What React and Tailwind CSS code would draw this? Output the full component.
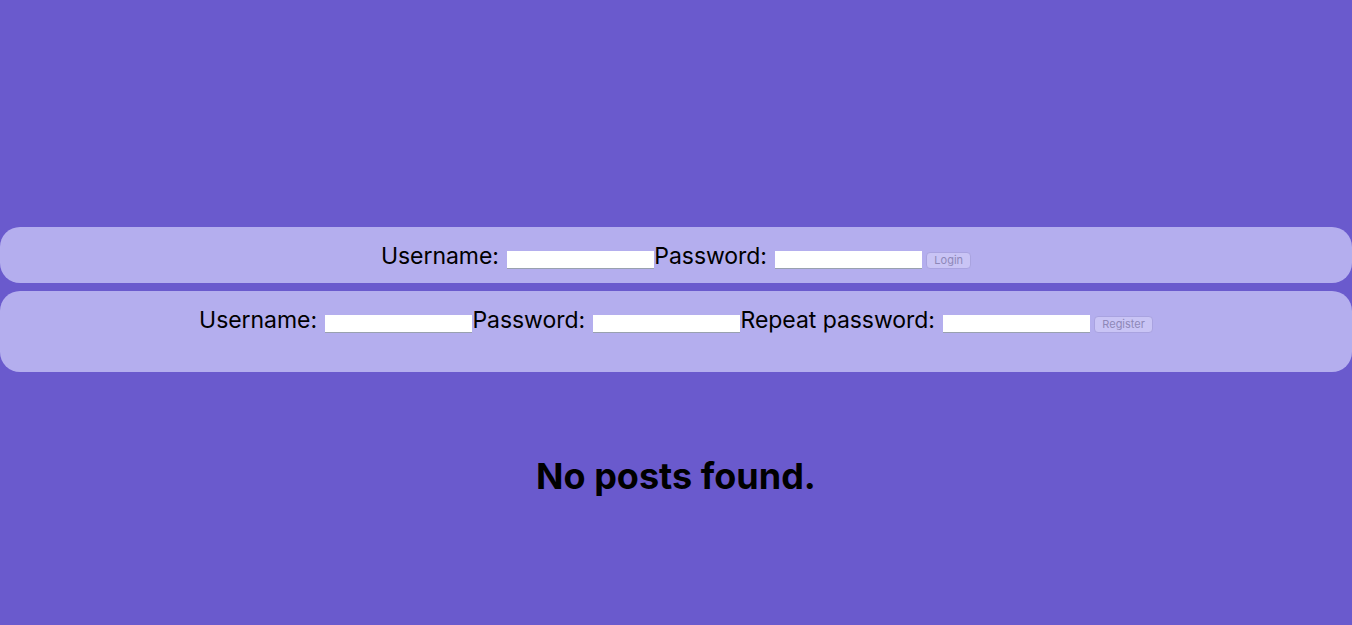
export default function App() {
  return (
    <div className="min-h-[625px] bg-[#6a5acd] pt-[227px] font-['Inter',sans-serif] text-black">
      <div className="flex h-[56px] items-center justify-center rounded-[20px] bg-[#b4aeee] pt-[2px]">
        <LoginForm />
      </div>
      <div className="mt-2 flex h-[81px] justify-center rounded-[20px] bg-[#b4aeee] pt-[14px]">
        <RegisterForm />
      </div>
      <h1 className="mt-[82px] text-center text-[36px] font-bold leading-[44px]">No posts found.</h1>
    </div>
  )
}

function Field({ label }) {
  return (
    <label className="flex items-center text-[23px] leading-[30px] tracking-[-0.05px]">
      <span>{label}:&nbsp;</span>
      <input className="ml-[2px] mt-[8px] h-[18px] w-[147px] border-b border-gray-400 bg-white" />
    </label>
  )
}

function SmallButton({ children }) {
  return (
    <button className="ml-1 mt-[8px] h-[17px] rounded-[4px] border border-[#a9a3e0] bg-[#c9c4f5] px-[7px] text-[11px] leading-[15px] text-[#8e88b8]">
      {children}
    </button>
  )
}

function LoginForm() {
  return (
    <form className="flex items-center">
      <Field label="Username" />
      <Field label="Password" />
      <SmallButton>Login</SmallButton>
    </form>
  )
}

function RegisterForm() {
  return (
    <form className="flex h-[30px] items-center">
      <Field label="Username" />
      <Field label="Password" />
      <Field label="Repeat password" />
      <SmallButton>Register</SmallButton>
    </form>
  )
}
